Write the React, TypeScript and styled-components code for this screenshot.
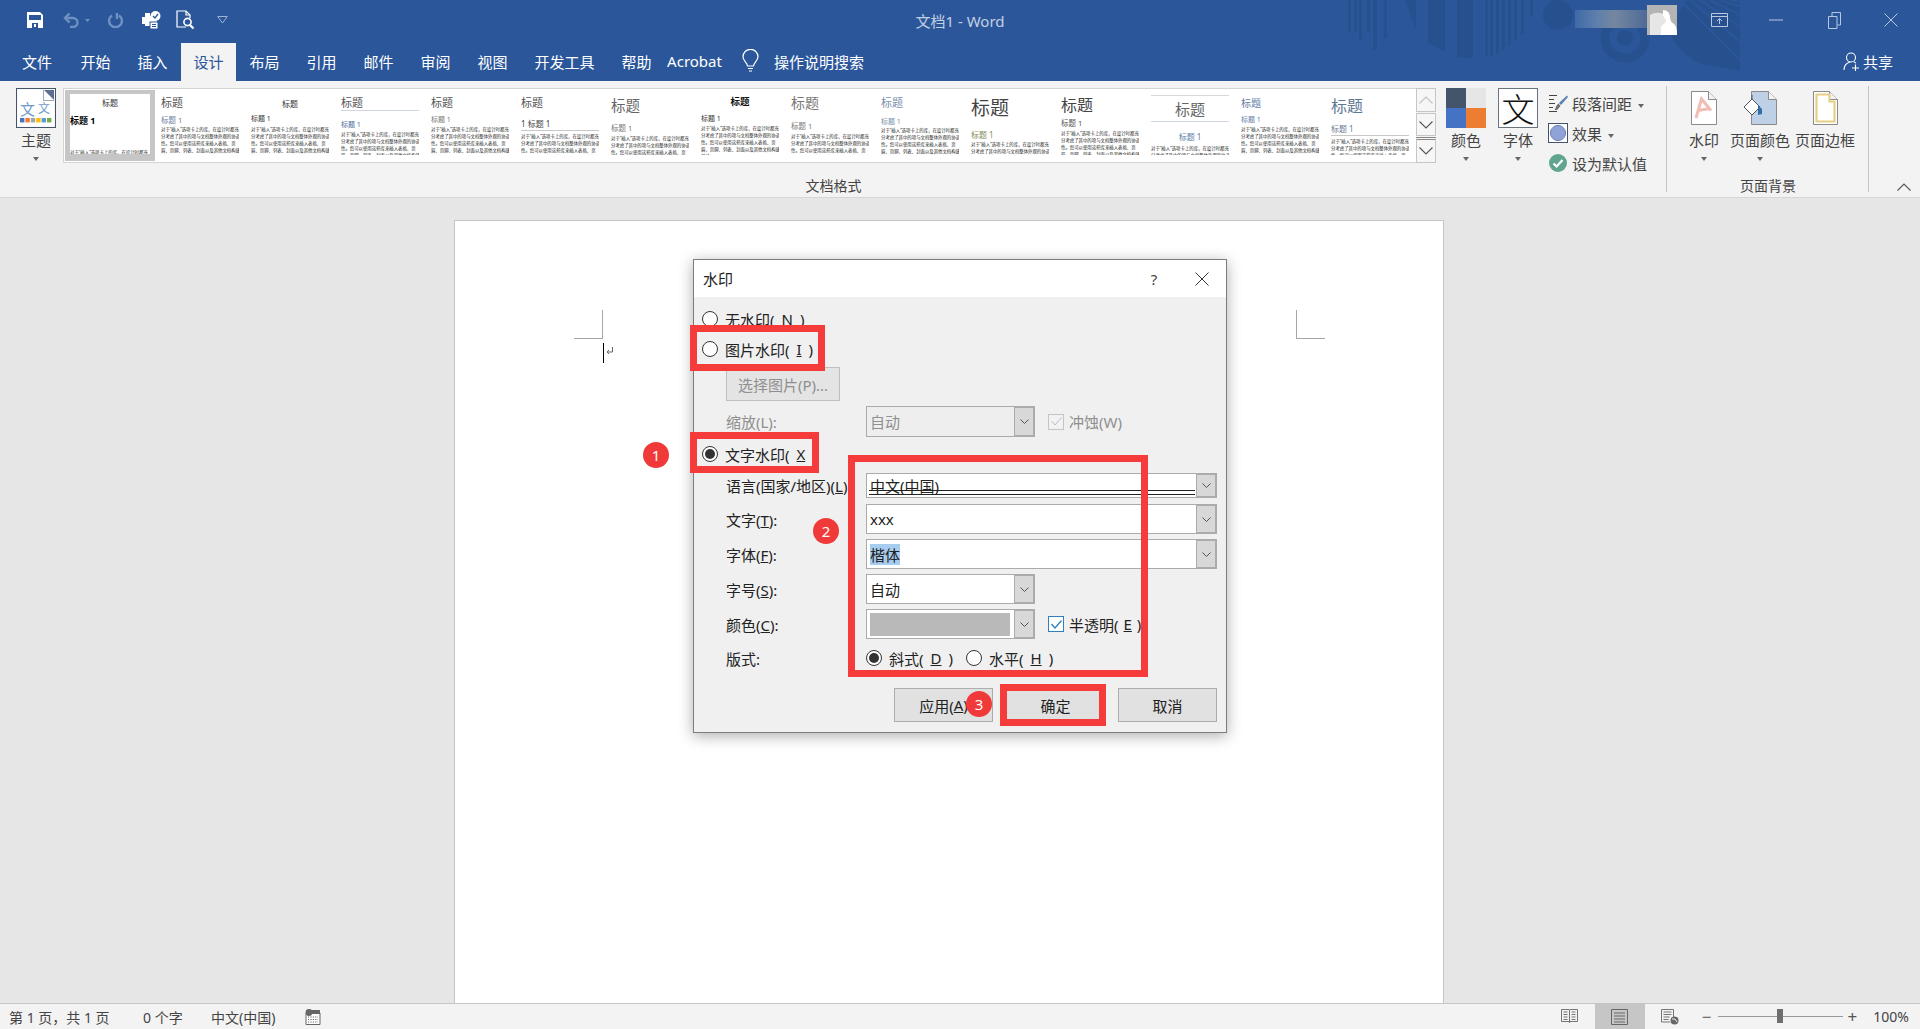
import React from "react";
import styled, { createGlobalStyle } from "styled-components";

const GlobalStyle = createGlobalStyle`
  html, body {
    margin: 0;
    padding: 0;
    background: #e6e6e6;
  }
  * {
    box-sizing: border-box;
  }
  body {
    font-family: "Noto Sans", "Noto Sans CJK SC", sans-serif;
  }
`;

const Screen = styled.div`
  position: relative;
  width: 1920px;
  height: 1029px;
  overflow: hidden;
  display: flex;
  flex-direction: column;
`;

/* ---------- title bar ---------- */

const TitleBar = styled.div`
  position: relative;
  height: 40px;
  flex: none;
  display: grid;
  grid-template-columns: 1fr auto 1fr;
  align-items: center;
  background: #2b579a;
`;

const TitleArt = styled.svg`
  position: absolute;
  left: 1340px;
  top: 0;
`;

const Qat = styled.div`
  position: relative;
  display: flex;
  align-items: center;
  padding-left: 27px;
`;

const QatSlot = styled.div<{ $w: number }>`
  width: ${(p) => p.$w}px;
  height: 20px;
  display: flex;
  align-items: center;
`;

const WindowTitle = styled.div`
  position: relative;
  font-size: 15px;
  color: #c3d0e4;
`;

const WindowControls = styled.div`
  position: relative;
  display: flex;
  justify-content: flex-end;
  align-items: center;
  height: 40px;
`;

const BlurredName = styled.div`
  width: 72px;
  height: 18px;
  margin-top: -2px;
  background: linear-gradient(90deg, #3f6aa7, #5f7fac 30%, #75879f 55%, #4e6a97);
`;

const Avatar = styled.div`
  width: 30px;
  height: 30px;
  background: #b4b4b4;
  overflow: hidden;
`;

const CtrlSlot = styled.div<{ $w: number }>`
  width: ${(p) => p.$w}px;
  display: flex;
  justify-content: center;
`;

/* ---------- tabs ---------- */

const TabBar = styled.div`
  height: 41px;
  flex: none;
  display: flex;
  align-items: flex-end;
  padding-left: 7px;
  background: #2b579a;
`;

const Tab = styled.div<{ $active?: boolean; $w: number }>`
  width: ${(p) => p.$w}px;
  height: 38px;
  display: flex;
  align-items: center;
  justify-content: center;
  padding-bottom: 2px;
  font-size: 15px;
  color: ${(p) => (p.$active ? "#2b579a" : "#fff")};
  background: ${(p) => (p.$active ? "#f3f3f3" : "transparent")};
`;

const SearchHint = styled.div`
  display: flex;
  align-items: center;
  gap: 15px;
  height: 38px;
  margin-left: 18px;
  padding-bottom: 2px;
  font-size: 15px;
  color: #fff;
`;

const Share = styled.div`
  display: flex;
  align-items: center;
  gap: 3px;
  height: 38px;
  margin-left: auto;
  padding: 0 27px 2px 0;
  font-size: 15px;
  color: #fff;
`;

/* ---------- ribbon ---------- */

const Ribbon = styled.div`
  height: 117px;
  flex: none;
  display: flex;
  background: #f3f3f3;
  border-bottom: 1px solid #d6d6d6;
  color: #444;
`;

const RibbonGroup = styled.div<{ $w: number; $sep?: boolean }>`
  width: ${(p) => p.$w}px;
  flex: none;
  display: flex;
  flex-direction: column;
  align-items: stretch;
  padding-top: 7px;
  position: relative;
  &::after {
    content: "";
    display: ${(p) => (p.$sep ? "block" : "none")};
    position: absolute;
    right: 0;
    top: 5px;
    bottom: 5px;
    width: 1px;
    background: #c6c6c6;
  }
`;

const GroupRow = styled.div<{ $pad: number; $gap?: number }>`
  height: 90px;
  display: flex;
  padding-left: ${(p) => p.$pad}px;
  gap: ${(p) => p.$gap || 0}px;
`;

const GroupLabel = styled.div`
  height: 16px;
  line-height: 16px;
  text-align: center;
  font-size: 14px;
  color: #444;
`;

const BigButton = styled.div<{ $w: number; $ml?: number }>`
  width: ${(p) => p.$w}px;
  margin-left: ${(p) => p.$ml || 0}px;
  flex: none;
  display: flex;
  flex-direction: column;
  align-items: center;
`;

const BigIcon = styled.div`
  width: 100%;
  height: 40px;
  display: flex;
  justify-content: center;
  align-items: center;
`;

const BigLabel = styled.div`
  height: 24px;
  line-height: 24px;
  font-size: 15px;
  white-space: nowrap;
  color: #444;
`;

const Caret = styled.span<{ $ml?: number }>`
  display: block;
  width: 0;
  height: 0;
  margin-top: 5px;
  margin-left: ${(p) => p.$ml || 0}px;
  border-left: 3px solid transparent;
  border-right: 3px solid transparent;
  border-top: 4px solid #666;
`;

const Gallery = styled.div`
  display: flex;
  width: 1373px;
  height: 75px;
  margin-left: 7px;
  flex: none;
`;

const GalleryList = styled.div`
  display: flex;
  flex: 1;
  padding: 1px;
  background: #fff;
  border: 1px solid #d4d4d4;
  border-right: 0;
  overflow: hidden;
`;

const Thumb = styled.div<{ $selected?: boolean }>`
  width: 90px;
  flex: none;
  padding: ${(p) => (p.$selected ? "4px 5px" : "5px 6px")};
  background: ${(p) => (p.$selected ? "#c6c6c6" : "#fff")};
`;

const ThumbInner = styled.div<{ $pad: number }>`
  height: 60px;
  overflow: hidden;
  padding-top: ${(p) => p.$pad}px;
  background: #fff;
`;

const ThumbTitle = styled.div<{
  $size: number;
  $color: string;
  $center?: boolean;
  $bold?: boolean;
  $h: number;
  $ruled?: boolean;
  $lined?: boolean;
}>`
  height: ${(p) => p.$h}px;
  line-height: ${(p) => p.$h}px;
  font-size: ${(p) => p.$size}px;
  color: ${(p) => p.$color};
  text-align: ${(p) => (p.$center ? "center" : "left")};
  font-weight: ${(p) => (p.$bold ? 700 : 400)};
  border-bottom: ${(p) => (p.$ruled ? "1px solid #cfd6e0" : "0")};
  border-top: ${(p) => (p.$lined ? "1px solid #d8d8d8" : "0")};
  white-space: nowrap;
`;

const ThumbHead = styled.div<{
  $size: number;
  $color: string;
  $gap: number;
  $center?: boolean;
  $bold?: boolean;
  $ruled?: boolean;
}>`
  height: ${(p) => (p.$ruled ? 11 : 8)}px;
  line-height: 8px;
  margin-top: ${(p) => p.$gap}px;
  font-size: ${(p) => p.$size}px;
  color: ${(p) => p.$color};
  text-align: ${(p) => (p.$center ? "center" : "left")};
  font-weight: ${(p) => (p.$bold ? 700 : 400)};
  border-bottom: ${(p) => (p.$ruled ? "1px solid #c8c8c8" : "0")};
  white-space: nowrap;
`;

const ThumbBody = styled.div<{ $gap: number }>`
  margin-top: ${(p) => p.$gap}px;
  font-size: 4.4px;
  line-height: 7px;
  color: #222;
  width: 80px;
`;

const Scroller = styled.div`
  width: 20px;
  flex: none;
  display: flex;
  flex-direction: column;
  gap: 1px;
`;

const ScrollBtn = styled.div<{ $h: number; $more?: boolean }>`
  height: ${(p) => p.$h}px;
  display: flex;
  justify-content: center;
  align-items: center;
  background: #f6f6f6;
  border: 1px solid #c6c6c6;
  border-top: ${(p) => (p.$more ? "3px double #888" : "1px solid #c6c6c6")};
`;

const ColorSwatch = styled.div`
  width: 40px;
  height: 40px;
  display: grid;
  grid-template-columns: 1fr 1fr;
  grid-template-rows: 1fr 1fr;
`;

const SwatchCell = styled.div<{ $c: string }>`
  background: ${(p) => p.$c};
`;

const FontSwatch = styled.div`
  width: 40px;
  height: 40px;
  display: flex;
  justify-content: center;
  align-items: center;
  background: #fff;
  border: 1px solid #6b7280;
  font-size: 33px;
  font-weight: 300;
  color: #111;
`;

const SmallCommands = styled.div`
  display: flex;
  flex-direction: column;
  margin-left: 10px;
  width: 115px;
`;

const SmallCommand = styled.div<{ $h: number }>`
  height: ${(p) => p.$h}px;
  display: flex;
  align-items: center;
  gap: 4px;
  font-size: 15px;
  white-space: nowrap;
  color: #444;
`;

const SmallIcon = styled.div`
  width: 20px;
  display: flex;
  justify-content: center;
`;

const Collapse = styled.div`
  flex: 1;
  display: flex;
  justify-content: flex-end;
  align-items: flex-end;
  padding: 0 9px 6px 0;
`;

/* ---------- page ---------- */

const Workspace = styled.div`
  flex: 1;
  min-height: 0;
  overflow: hidden;
  padding: 22px 22px 0 0;
  background: #e6e6e6;
  display: flex;
  justify-content: center;
`;

const Page = styled.div`
  width: 990px;
  height: 900px;
  flex: none;
  display: flex;
  justify-content: space-between;
  padding: 89px 118px 0 119px;
  background: #fff;
  border: 1px solid #c6c6c6;
`;

const MarginColumn = styled.div`
  display: flex;
  flex-direction: column;
`;

const CropMark = styled.div<{ $side: "left" | "right" }>`
  width: 29px;
  height: 29px;
  border-bottom: 1px solid #a6a6a6;
  border-${(p) => (p.$side === "left" ? "right" : "left")}: 1px solid #a6a6a6;
`;

const CaretLine = styled.div`
  display: flex;
  margin: 4px 0 0 29px;
`;

/* ---------- dialog ---------- */

const Dialog = styled.div`
  position: absolute;
  left: 693px;
  top: 259px;
  width: 534px;
  height: 474px;
  display: flex;
  flex-direction: column;
  background: #f0f0f0;
  border: 1px solid #7d7d7d;
  box-shadow: 0 3px 14px rgba(0, 0, 0, 0.32);
  font-size: 15px;
  color: #222;
`;

const DialogHead = styled.div`
  height: 37px;
  flex: none;
  display: flex;
  align-items: center;
  padding: 0 0 0 9px;
  background: #fff;
`;

const DialogTitle = styled.div`
  flex: 1;
`;

const HelpMark = styled.div`
  width: 16px;
  margin-right: 33px;
  text-align: center;
  color: #444;
`;

const CloseMark = styled.div`
  width: 14px;
  height: 14px;
  margin-right: 17px;
  display: flex;
`;

const DialogBody = styled.div`
  flex: 1;
  display: flex;
  flex-direction: column;
  padding: 12px 9px 0 8px;
`;

const RadioRow = styled.div<{ $mt?: number; $ml?: number }>`
  height: 20px;
  display: flex;
  align-items: center;
  margin-top: ${(p) => p.$mt || 0}px;
  margin-left: ${(p) => p.$ml || 0}px;
  gap: 7px;
  white-space: nowrap;
`;

const Radio = styled.span<{ $on?: boolean }>`
  width: 16px;
  height: 16px;
  flex: none;
  border-radius: 50%;
  border: 1px solid #333;
  background: #fff;
  display: flex;
  justify-content: center;
  align-items: center;
  &::after {
    content: "";
    display: ${(p) => (p.$on ? "block" : "none")};
    width: 10px;
    height: 10px;
    border-radius: 50%;
    background: #333;
  }
`;

const PushButton = styled.div<{ $w: number; $disabled?: boolean }>`
  width: ${(p) => p.$w}px;
  height: 34px;
  flex: none;
  display: flex;
  justify-content: center;
  align-items: center;
  background: #e1e1e1;
  border: 1px solid ${(p) => (p.$disabled ? "#bfbfbf" : "#adadad")};
  color: ${(p) => (p.$disabled ? "#8f8f8f" : "#222")};
  white-space: nowrap;
`;

const PictureButton = styled(PushButton)`
  margin: 8px 0 0 24px;
  background: #e4e4e4;
`;

const FieldRow = styled.div<{ $h: number; $mt: number }>`
  height: ${(p) => p.$h}px;
  margin-top: ${(p) => p.$mt}px;
  margin-left: 24px;
  display: flex;
  align-items: center;
`;

const FieldLabel = styled.div<{ $disabled?: boolean }>`
  width: 140px;
  flex: none;
  white-space: nowrap;
  color: ${(p) => (p.$disabled ? "#8f8f8f" : "#222")};
`;

const Combo = styled.div<{ $w: number; $disabled?: boolean }>`
  width: ${(p) => p.$w}px;
  height: 100%;
  flex: none;
  display: flex;
  align-items: stretch;
  background: ${(p) => (p.$disabled ? "#eeeeee" : "#fff")};
  border: 1px solid #ababab;
  color: ${(p) => (p.$disabled ? "#8f8f8f" : "#222")};
`;

const ComboValue = styled.div`
  flex: 1;
  min-width: 0;
  display: flex;
  align-items: center;
  padding-left: 3px;
`;

const LangValue = styled(ComboValue)`
  position: relative;
  &::after {
    content: "";
    position: absolute;
    left: 2px;
    right: 1px;
    bottom: 2px;
    height: 3px;
    border-top: 1px solid #222;
    border-bottom: 1px solid #222;
  }
`;

const Selected = styled.span`
  background: #a6cdf0;
`;

const ColorValue = styled.div`
  flex: 1;
  margin: 3px 4px 2px 3px;
  background: #b9b9b9;
`;

const ComboArrow = styled.div`
  width: 20px;
  flex: none;
  display: flex;
  justify-content: center;
  align-items: center;
  background: #d8d8d8;
  border: 1px solid #ababab;
`;

const CheckLabel = styled.div<{ $disabled?: boolean }>`
  display: flex;
  align-items: center;
  gap: 5px;
  margin-left: 13px;
  white-space: nowrap;
  color: ${(p) => (p.$disabled ? "#8f8f8f" : "#222")};
`;

const CheckBox = styled.span<{ $disabled?: boolean }>`
  width: 16px;
  height: 16px;
  flex: none;
  display: flex;
  justify-content: center;
  align-items: center;
  background: ${(p) => (p.$disabled ? "#f2f2f2" : "#fff")};
  border: 1px solid ${(p) => (p.$disabled ? "#c4c4c4" : "#2f7fc4")};
`;

const OrientationRow = styled.div`
  display: flex;
  align-items: center;
  gap: 13px;
`;

const DialogActions = styled.div`
  margin-top: 20px;
  display: flex;
  justify-content: flex-end;
  gap: 13px;
`;

/* ---------- annotations ---------- */

const RedBox = styled.div<{ $x: number; $y: number; $w: number; $h: number }>`
  position: absolute;
  left: ${(p) => p.$x}px;
  top: ${(p) => p.$y}px;
  width: ${(p) => p.$w}px;
  height: ${(p) => p.$h}px;
  border: 7px solid #f63b3b;
`;

const Badge = styled.div<{ $x: number; $y: number }>`
  position: absolute;
  left: ${(p) => p.$x - 13}px;
  top: ${(p) => p.$y - 13}px;
  width: 26px;
  height: 26px;
  border-radius: 50%;
  background: #f03a3a;
  color: #fff;
  font-size: 15px;
  display: flex;
  justify-content: center;
  align-items: center;
`;

/* ---------- status bar ---------- */

const StatusBar = styled.div`
  height: 26px;
  flex: none;
  display: flex;
  align-items: stretch;
  background: #f3f3f3;
  border-top: 1px solid #c6c6c6;
  font-size: 14px;
  color: #444;
`;

const StatusLeft = styled.div`
  display: flex;
  align-items: center;
  padding-left: 9px;
`;

const StatusText = styled.span<{ $w: number }>`
  width: ${(p) => p.$w}px;
  white-space: nowrap;
`;

const StatusRight = styled.div`
  margin-left: auto;
  display: flex;
  align-items: center;
  padding-right: 11px;
`;

const ViewBtn = styled.div<{ $active?: boolean; $w: number }>`
  width: ${(p) => p.$w}px;
  height: 25px;
  display: flex;
  justify-content: center;
  align-items: center;
  background: ${(p) => (p.$active ? "#c6c6c6" : "transparent")};
`;

const ZoomSign = styled.span<{ $ml: number }>`
  margin-left: ${(p) => p.$ml}px;
  font-size: 17px;
  line-height: 20px;
  color: #555;
`;

const ZoomTrack = styled.div`
  position: relative;
  width: 125px;
  height: 1px;
  margin-left: 6px;
  background: #9a9a9a;
`;

const ZoomThumb = styled.div`
  position: absolute;
  left: 59px;
  top: -7px;
  width: 6px;
  height: 14px;
  background: #6f6f6f;
`;

const ZoomValue = styled.span`
  margin-left: 16px;
  font-size: 14px;
`;

/* ---------- icons ---------- */

const SaveIcon = () => (
  <svg width="16" height="16" viewBox="0 0 16 16">
    <path fill="#fff" fillRule="evenodd" d="M0 0h13l3 3v13H0zM2 3v5h12V3zM5 11v5h6v-5zM7 12h2v3H7z" />
  </svg>
);

const UndoIcon = () => (
  <svg width="17" height="16" viewBox="0 0 17 16" fill="none" stroke="#6f90c0" strokeWidth="2.4">
    <path d="M2 6h8a4.4 4.4 0 0 1 0 9H7" />
    <path d="M6.5 1.5 2 6l4.5 4.5" />
  </svg>
);

const RedoIcon = () => (
  <svg width="16" height="17" viewBox="0 0 16 17" fill="none" stroke="#6f90c0" strokeWidth="2.4">
    <path d="M5 3.4a6.4 6.4 0 1 0 7 0" />
    <path d="M10 1v6" />
  </svg>
);

const TinyDown = ({ c = "#6f90c0" }: { c?: string }) => (
  <svg width="5" height="3" viewBox="0 0 5 3">
    <path fill={c} d="M0 0h5L2.5 3z" />
  </svg>
);

const PrintCheckIcon = () => (
  <svg width="19" height="18" viewBox="0 0 19 18">
    <path fill="#fff" d="M3 2h5v3h2l1 1h2v4h2v2h-3v-1H8v4H3v-2H0V6h3z" />
    <rect x="8" y="11" width="8" height="7" fill="#fff" stroke="#2b579a" />
    <path stroke="#2b579a" d="M10 13.5h4M10 15.5h4" />
    <circle cx="13.5" cy="5" r="5" fill="#fff" />
    <path d="M11 5l2 2 3-4" stroke="#2b579a" strokeWidth="1.3" fill="none" />
  </svg>
);

const PreviewIcon = () => (
  <svg width="19" height="20" viewBox="0 0 19 20" fill="none" stroke="#fff" strokeWidth="1.2">
    <path d="M10 17H1V1h9l4 4v3" />
    <path d="M10 1v4h4" />
    <circle cx="11.5" cy="12" r="3.6" strokeWidth="1.6" />
    <path d="M14 15l3.5 3.5" strokeWidth="2.2" />
  </svg>
);

const ChevronUpDown = ({ up, c = "#555", w = 14 }: { up?: boolean; c?: string; w?: number }) => (
  <svg width={w} height={w / 2 + 1} viewBox="0 0 14 8" fill="none" stroke={c} strokeWidth="1.1">
    <path d={up ? "M0.5 7.5 7 1l6.5 6.5" : "M0.5 0.5 7 7l6.5-6.5"} />
  </svg>
);

const ComboChevron = () => (
  <svg width="9" height="5" viewBox="0 0 9 5" fill="none" stroke="#444" strokeWidth="0.9">
    <path d="M0.5 0.5 4.5 4.5l4-4" />
  </svg>
);

const Bulb = () => (
  <svg width="17" height="24" viewBox="0 0 17 24" fill="none" stroke="#fff" strokeWidth="1.2">
    <path d="M5.5 17c0-3-4.5-5-4.5-9.2a7.5 7.5 0 0 1 15 0C16 12 11.5 14 11.5 17z" />
    <path d="M6 19.5h5M7 22h3" />
  </svg>
);

const ShareIcon = () => (
  <svg width="17" height="19" viewBox="0 0 17 19" fill="none" stroke="#fff" strokeWidth="1.1">
    <circle cx="8" cy="5.5" r="4.5" />
    <path d="M1 18c0-4 2.5-7 6-8M11 10c.8.3 1.4.7 2 1.2M9 16h7M12.5 12.5v7" />
  </svg>
);

const ThemeIcon = () => (
  <svg width="40" height="40" viewBox="0 0 40 40">
    <rect x="0.5" y="0.5" width="39" height="39" fill="#f8f8f8" stroke="#44546a" />
    <path fill="#fff" d="M2 2h26l10 10v26H2z" />
    <path fill="#5d6f8c" d="M28 2h10v10z" />
    <path fill="#44546a" d="M28 2v10h10v1H27V2z" opacity="0.5" />
    <text x="4" y="27" fontSize="15" fill="#6f9ac8" fontFamily="Noto Sans CJK SC">文</text>
    <text x="22" y="25" fontSize="12" fill="#6f9ac8" fontFamily="Noto Sans CJK SC">文</text>
    {["#4472c4", "#ed7d31", "#a5a5a5", "#ffc000", "#5b9bd5", "#70ad47"].map((c, i) => (
      <rect key={c} x={4 + i * 5.4} y="30" width="4.4" height="4.4" fill={c} />
    ))}
  </svg>
);

const SpacingIcon = () => (
  <svg width="19" height="19" viewBox="0 0 19 19" fill="none">
    <path stroke="#444" d="M0 1.5h8M0 5.5h5M0 9.5h6M0 13.5h4M0 17.5h8" />
    <path fill="#5a80b4" d="M18 1.5 19 3l-7 8-2-2z" />
    <path fill="#70706a" d="M9.5 9.5 11.5 12 8 16H5.5c1.5-1.5 1-4 4-6.5z" />
  </svg>
);

const EffectIcon = () => (
  <svg width="20" height="20" viewBox="0 0 20 20">
    <rect x="0.5" y="0.5" width="19" height="19" fill="#fff" stroke="#44546a" />
    <circle cx="10" cy="10" r="7.6" fill="#8fa3d8" stroke="#6f82b8" />
  </svg>
);

const DefaultIcon = () => (
  <svg width="18" height="18" viewBox="0 0 18 18">
    <circle cx="9" cy="9" r="9" fill="#5fa58f" />
    <path d="M4.5 9.5 7.6 12.5 13.5 6" fill="none" stroke="#fff" strokeWidth="2.2" />
  </svg>
);

const WatermarkIcon = () => (
  <svg width="26" height="34" viewBox="0 0 26 34" fill="none">
    <path d="M.5.5h17l8 8v25H.5z" fill="#fff" stroke="#8a8a8a" />
    <path d="M17.5.5v8h8" stroke="#8a8a8a" fill="#f3f3f3" />
    <path d="M5 27 10.5 8 20 19.5M7 19.5l12-2" stroke="#f0bcb4" strokeWidth="3" />
  </svg>
);

const PageColorIcon = () => (
  <svg width="34" height="34" viewBox="0 0 34 34" fill="none">
    <path d="M8.5.5h17l8 8v25h-25z" fill="#bdd0e6" stroke="#8a8a8a" />
    <path d="M25.5.5v8h8" stroke="#8a8a8a" fill="#f3f3f3" />
    <path d="M1 16 9 8l8 8-8 8z" fill="#fff" stroke="#555" />
    <path d="M9 8V4" stroke="#555" />
    <path d="M15 14l4 4v5l-4 1z" fill="#2f6fa8" />
  </svg>
);

const PageBorderIcon = () => (
  <svg width="25" height="34" viewBox="0 0 25 34" fill="none">
    <path d="M.5.5h16l8 8v25H.5z" fill="#fff" stroke="#8a8a8a" />
    <path d="M16.5.5v8h8" stroke="#8a8a8a" fill="#f3f3f3" />
    <path d="M3.5 3.5h13v7h5v20h-18z" stroke="#e6cf88" strokeWidth="2.2" />
  </svg>
);

const PaperIcon = ({ active }: { active?: boolean }) => (
  <svg width="17" height="16" viewBox="0 0 17 16" fill="none" stroke="#666">
    <path d="M.5.5h16v15H.5zM3 4h11M3 7h11M3 10h11M3 13h11" strokeWidth={active ? 1 : 0.9} />
  </svg>
);

const ReadIcon = () => (
  <svg width="17" height="16" viewBox="0 0 17 16" fill="none" stroke="#666" strokeWidth="0.9">
    <path d="M.5.5h7.5L8.5 1.5 9 .5h7.5v12H9L8.5 13.5 8 12.5H.5zM8.5 1.5v12M2.5 3h4M2.5 5.5h4M2.5 8h4M2.5 10.5h4M10.5 3h4M10.5 5.5h4M10.5 8h4M10.5 10.5h4" />
  </svg>
);

const WebIcon = () => (
  <svg width="18" height="16" viewBox="0 0 18 16" fill="none" stroke="#666" strokeWidth="0.9">
    <path d="M9 13H.5V.5H12.5V8M2.5 3h8M2.5 5.5h8M2.5 8h6M2.5 10.5h5" />
    <circle cx="13.5" cy="11.5" r="4" fill="#666" stroke="none" />
    <path d="M11 10h3l2 3" stroke="#fff" />
  </svg>
);

const MacroIcon = () => (
  <svg width="16" height="16" viewBox="0 0 16 16" fill="none">
    <path d="M1 4h14v11.5H1z" fill="#fff" stroke="#666" />
    <rect x="1" y="1" width="14" height="4" fill="#666" />
    <circle cx="4" cy="3.5" r="3.4" fill="#666" />
    <path stroke="#666" strokeDasharray="1.2 1.2" d="M3 8h10M3 10.5h10M3 13h10" />
  </svg>
);

const ArtStripes = () => (
  <TitleArt width="400" height="81" viewBox="0 0 400 81">
    <g fill="#27508f">
      {[
        [8, 3, 32],
        [14, 3, 32],
        [19, 3, 40],
        [27, 3, 32],
        [33, 4, 50],
        [44, 3, 38],
        [117, 16, 58],
        [145, 3, 56],
        [150, 3, 56],
        [156, 3, 54],
        [162, 3, 50],
        [168, 3, 46],
        [174, 3, 40],
        [181, 3, 34],
        [190, 3, 16],
      ].map(([x, w, h]) => (
        <rect key={x} x={x} y="0" width={w} height={h} />
      ))}
      <path d="M65 0h11v30zM88 0h17v52l-17-9z" />
      <circle cx="218" cy="15" r="15" />
      <circle cx="285" cy="38" r="8" />
      <circle cx="285" cy="38" r="20" fill="none" stroke="#27508f" strokeWidth="9" />
      <path d="M328 30c6 15 18 28 36 35l36 6V0h-53z" />
    </g>
    <g stroke="#2b579a" strokeWidth="2">
      {[0, 10, 20, 30, 40, 50].map((d) => (
        <path key={d} d={`M${340 + d} 0l60 ${60 - d}`} />
      ))}
    </g>
  </TitleArt>
);

/* ---------- data ---------- */

const SAMPLE =
  "对于“插入”选项卡上的库，在设计时都充分考虑了其中的项与文档整体外观的协调性。您可以使用这些库来插入表格、页眉、页脚、列表、封面以及其他文档构建基块。";

const TITLE_GRAY = "#555";
const BLUE = "#6c80a4";

interface ThumbData {
  pad: number;
  size: number;
  color: string;
  h?: number;
  center?: boolean;
  bold?: boolean;
  ruled?: boolean;
  lined?: boolean;
  head: string;
  headSize: number;
  headColor: string;
  headGap: number;
  headCenter?: boolean;
  headBold?: boolean;
  headRuled?: boolean;
  bodyGap: number;
}

const THUMBS: ThumbData[] = [
  { pad: 1, size: 8, color: "#333", h: 16, center: true, head: "标题 1", headSize: 9, headColor: "#000", headGap: 6, headBold: true, bodyGap: 24 },
  { pad: 0, size: 11, color: TITLE_GRAY, h: 16, head: "标题 1", headSize: 7.5, headColor: BLUE, headGap: 5, bodyGap: 2 },
  { pad: 1, size: 8, color: "#333", h: 16, center: true, head: "标题 1", headSize: 7, headColor: "#333", headGap: 3, bodyGap: 3 },
  { pad: 0, size: 11, color: TITLE_GRAY, h: 16, ruled: true, head: "标题 1", headSize: 7, headColor: "#4a6a9c", headGap: 10, bodyGap: 2 },
  { pad: 0, size: 11, color: TITLE_GRAY, h: 16, head: "标题 1", headSize: 7, headColor: "#777", headGap: 5, bodyGap: 2 },
  { pad: 0, size: 11, color: TITLE_GRAY, h: 16, head: "1 标题 1", headSize: 8, headColor: "#444", headGap: 9, headRuled: true, bodyGap: 2 },
  { pad: 2, size: 14.5, color: "#666", h: 16, head: "标题 1", headSize: 7.5, headColor: "#777", headGap: 11, bodyGap: 3 },
  { pad: 0, size: 9.5, color: "#111", h: 14, center: true, bold: true, head: "标题 1", headSize: 7, headColor: "#333", headGap: 6, bodyGap: 2 },
  { pad: 0, size: 14, color: "#777", h: 16, head: "标题 1", headSize: 7.5, headColor: "#777", headGap: 11, bodyGap: 3 },
  { pad: 0, size: 11, color: "#7b8fae", h: 16, head: "标题 1", headSize: 7, headColor: "#7b8fae", headGap: 7, bodyGap: 1 },
  { pad: 3, size: 19, color: "#444", h: 20, head: "标题 1", headSize: 8, headColor: "#7f8f56", headGap: 13, bodyGap: 2 },
  { pad: 2, size: 16, color: "#444", h: 16, head: "标题 1", headSize: 7.5, headColor: "#555", headGap: 6, bodyGap: 3 },
  { pad: 0, size: 15, color: "#666", h: 27, center: true, ruled: true, lined: true, head: "标题 1", headSize: 8, headColor: "#5b7da6", headGap: 11, headCenter: true, bodyGap: 4 },
  { pad: 0, size: 10, color: "#5f7ca8", h: 16, head: "标题 1", headSize: 7, headColor: "#5f7ca8", headGap: 5, bodyGap: 2 },
  { pad: 2, size: 16, color: "#5f7896", h: 18, head: "标题 1", headSize: 8, headColor: "#6c7d96", headGap: 10, headRuled: true, bodyGap: 2 },
];

const TABS: [string, number, boolean?][] = [
  ["文件", 60],
  ["开始", 57],
  ["插入", 57],
  ["设计", 55, true],
  ["布局", 57],
  ["引用", 57],
  ["邮件", 57],
  ["审阅", 57],
  ["视图", 57],
  ["开发工具", 87],
  ["帮助", 57],
  ["Acrobat", 59],
];

const App = () => (
  <>
    <GlobalStyle />
    <Screen>
      <TitleBar>
        <ArtStripes />
        <Qat>
          <QatSlot $w={36}><SaveIcon /></QatSlot>
          <QatSlot $w={22}><UndoIcon /></QatSlot>
          <QatSlot $w={22}><TinyDown /></QatSlot>
          <QatSlot $w={35}><RedoIcon /></QatSlot>
          <QatSlot $w={34}><PrintCheckIcon /></QatSlot>
          <QatSlot $w={41}><PreviewIcon /></QatSlot>
          <QatSlot $w={12}>
            <svg width="11" height="8" viewBox="0 0 11 8" fill="none" stroke="#9fb4d6">
              <path d="M.5 .5h10M1 1l4.500 6 4.500-6" />
            </svg>
          </QatSlot>
        </Qat>
        <WindowTitle>文档1 - Word</WindowTitle>
        <WindowControls>
          <BlurredName />
          <Avatar>
            <svg width="30" height="30" viewBox="0 0 30 30">
              <path fill="#e6e6e6" d="M3 10c5-3 11-3 15 0v20H3z" />
              <path fill="#fff" d="M16 5c4 0 7 3 7 7 0 3 1 5 4 7 2 2 3 5 3 11H14c0-6-1-9 3-11 2-2 2-5-1-8z" />
            </svg>
          </Avatar>
          <CtrlSlot $w={84}>
            <svg width="17" height="14" viewBox="0 0 17 14" fill="none" stroke="#b9c8e0">
              <path d="M.5.5h16v13H.5zM.5 3.500h16M8.500 11V6M6 8l2.500-2.500L11 8" />
            </svg>
          </CtrlSlot>
          <CtrlSlot $w={30}>
            <svg width="14" height="2" viewBox="0 0 14 2"><path stroke="#b9c8e0" d="M0 1h14" /></svg>
          </CtrlSlot>
          <CtrlSlot $w={86}>
            <svg width="13" height="17" viewBox="0 0 13 17" fill="none" stroke="#b9c8e0">
              <path d="M.5 4.500h8.500v12H.5zM4 4V.5h8.500V13H9.500" />
            </svg>
          </CtrlSlot>
          <CtrlSlot $w={28}>
            <svg width="14" height="14" viewBox="0 0 14 14" stroke="#b9c8e0"><path d="M.5.5l13 13M13.500.5l-13 13" /></svg>
          </CtrlSlot>
          <CtrlSlot $w={15} />
        </WindowControls>
      </TitleBar>

      <TabBar>
        {TABS.map(([label, w, active]) => (
          <Tab key={label} $w={w} $active={active}>{label}</Tab>
        ))}
        <SearchHint>
          <Bulb />
          操作说明搜索
        </SearchHint>
        <Share>
          <ShareIcon />
          共享
        </Share>
      </TabBar>

      <Ribbon>
        <RibbonGroup $w={1667} $sep>
          <GroupRow $pad={16}>
            <BigButton $w={40}>
              <BigIcon><ThemeIcon /></BigIcon>
              <BigLabel>主题</BigLabel>
              <Caret />
            </BigButton>
            <Gallery>
              <GalleryList>
                {THUMBS.map((t, i) => (
                  <Thumb key={i} $selected={i === 0}>
                    <ThumbInner $pad={t.pad}>
                      <ThumbTitle
                        $size={t.size}
                        $color={t.color}
                        $h={t.h || 16}
                        $center={t.center}
                        $bold={t.bold}
                        $ruled={t.ruled}
                        $lined={t.lined}
                      >
                        标题
                      </ThumbTitle>
                      <ThumbHead
                        $size={t.headSize}
                        $color={t.headColor}
                        $gap={t.headGap}
                        $center={t.headCenter}
                        $bold={t.headBold}
                        $ruled={t.headRuled}
                      >
                        {t.head}
                      </ThumbHead>
                      <ThumbBody $gap={t.bodyGap}>{SAMPLE}</ThumbBody>
                    </ThumbInner>
                  </Thumb>
                ))}
              </GalleryList>
              <Scroller>
                <ScrollBtn $h={24}><ChevronUpDown up c="#c4c4c4" /></ScrollBtn>
                <ScrollBtn $h={23}><ChevronUpDown /></ScrollBtn>
                <ScrollBtn $h={26} $more><ChevronUpDown /></ScrollBtn>
              </Scroller>
            </Gallery>
            <BigButton $w={40} $ml={10}>
              <ColorSwatch>
                <SwatchCell $c="#44546a" />
                <SwatchCell $c="#e7e6e6" />
                <SwatchCell $c="#4472c4" />
                <SwatchCell $c="#ed7d31" />
              </ColorSwatch>
              <BigLabel>颜色</BigLabel>
              <Caret />
            </BigButton>
            <BigButton $w={40} $ml={12}>
              <FontSwatch>文</FontSwatch>
              <BigLabel>字体</BigLabel>
              <Caret />
            </BigButton>
            <SmallCommands>
              <SmallCommand $h={30}>
                <SmallIcon><SpacingIcon /></SmallIcon>
                段落间距
                <Caret $ml={2} />
              </SmallCommand>
              <SmallCommand $h={30}>
                <SmallIcon><EffectIcon /></SmallIcon>
                效果
                <Caret $ml={2} />
              </SmallCommand>
              <SmallCommand $h={30}>
                <SmallIcon><DefaultIcon /></SmallIcon>
                设为默认值
              </SmallCommand>
            </SmallCommands>
          </GroupRow>
          <GroupLabel>文档格式</GroupLabel>
        </RibbonGroup>

        <RibbonGroup $w={202} $sep>
          <GroupRow $pad={22}>
            <BigButton $w={30}>
              <BigIcon><WatermarkIcon /></BigIcon>
              <BigLabel>水印</BigLabel>
              <Caret />
            </BigButton>
            <BigButton $w={60} $ml={11}>
              <BigIcon><PageColorIcon /></BigIcon>
              <BigLabel>页面颜色</BigLabel>
              <Caret />
            </BigButton>
            <BigButton $w={60} $ml={5}>
              <BigIcon><PageBorderIcon /></BigIcon>
              <BigLabel>页面边框</BigLabel>
            </BigButton>
          </GroupRow>
          <GroupLabel>页面背景</GroupLabel>
        </RibbonGroup>

        <Collapse><ChevronUpDown up c="#555" /></Collapse>
      </Ribbon>

      <Workspace>
        <Page>
          <MarginColumn>
            <CropMark $side="left" />
            <CaretLine>
              <svg width="12" height="20" viewBox="0 0 12 20" fill="none" stroke="#666">
                <path stroke="#000" d="M.5 0v20" />
                <path d="M9.500 4v5H4M6 7 4 9l2 2" />
              </svg>
            </CaretLine>
          </MarginColumn>
          <CropMark $side="right" />
        </Page>
      </Workspace>

      <StatusBar>
        <StatusLeft>
          <StatusText $w={134}>第 1 页，共 1 页</StatusText>
          <StatusText $w={68}>0 个字</StatusText>
          <StatusText $w={94}>中文(中国)</StatusText>
          <MacroIcon />
        </StatusLeft>
        <StatusRight>
          <ViewBtn $w={50}><ReadIcon /></ViewBtn>
          <ViewBtn $w={50} $active><PaperIcon active /></ViewBtn>
          <ViewBtn $w={50}><WebIcon /></ViewBtn>
          <ZoomSign $ml={7}>−</ZoomSign>
          <ZoomTrack><ZoomThumb /></ZoomTrack>
          <ZoomSign $ml={5}>+</ZoomSign>
          <ZoomValue>100%</ZoomValue>
        </StatusRight>
      </StatusBar>

      <Dialog>
        <DialogHead>
          <DialogTitle>水印</DialogTitle>
          <HelpMark>?</HelpMark>
          <CloseMark>
            <svg width="14" height="14" viewBox="0 0 14 14" stroke="#333"><path d="M.5.5l13 13M13.500.5l-13 13" /></svg>
          </CloseMark>
        </DialogHead>
        <DialogBody>
          <RadioRow><Radio />无水印(<u>N</u>)</RadioRow>
          <RadioRow $mt={10}><Radio />图片水印(<u>I</u>)</RadioRow>
          <PictureButton $w={114} $disabled>选择图片(P)...</PictureButton>
          <FieldRow $h={31} $mt={5}>
            <FieldLabel $disabled>缩放(L):</FieldLabel>
            <Combo $w={169} $disabled>
              <ComboValue>自动</ComboValue>
              <ComboArrow><ComboChevron /></ComboArrow>
            </Combo>
            <CheckLabel $disabled>
              <CheckBox $disabled>
                <svg width="11" height="9" viewBox="0 0 11 9" fill="none" stroke="#bdbdbd"><path d="M.5 4 4 8l6.500-7.500" /></svg>
              </CheckBox>
              冲蚀(W)
            </CheckLabel>
          </FieldRow>
          <RadioRow $mt={7}><Radio $on />文字水印(<u>X</u>)</RadioRow>
          <FieldRow $h={25} $mt={9}>
            <FieldLabel>语言(国家/地区)(<u>L</u>):</FieldLabel>
            <Combo $w={351}>
              <LangValue>中文(中国)</LangValue>
              <ComboArrow><ComboChevron /></ComboArrow>
            </Combo>
          </FieldRow>
          <FieldRow $h={30} $mt={6}>
            <FieldLabel>文字(<u>T</u>):</FieldLabel>
            <Combo $w={351}>
              <ComboValue>xxx</ComboValue>
              <ComboArrow><ComboChevron /></ComboArrow>
            </Combo>
          </FieldRow>
          <FieldRow $h={30} $mt={5}>
            <FieldLabel>字体(<u>F</u>):</FieldLabel>
            <Combo $w={351}>
              <ComboValue><Selected>楷体</Selected></ComboValue>
              <ComboArrow><ComboChevron /></ComboArrow>
            </Combo>
          </FieldRow>
          <FieldRow $h={30} $mt={5}>
            <FieldLabel>字号(<u>S</u>):</FieldLabel>
            <Combo $w={169}>
              <ComboValue>自动</ComboValue>
              <ComboArrow><ComboChevron /></ComboArrow>
            </Combo>
          </FieldRow>
          <FieldRow $h={30} $mt={5}>
            <FieldLabel>颜色(<u>C</u>):</FieldLabel>
            <Combo $w={169}>
              <ColorValue />
              <ComboArrow><ComboChevron /></ComboArrow>
            </Combo>
            <CheckLabel>
              <CheckBox>
                <svg width="11" height="9" viewBox="0 0 11 9" fill="none" stroke="#2f7fc4" strokeWidth="1.3"><path d="M.5 4 4 8l6.500-7.500" /></svg>
              </CheckBox>
              半透明(<u>E</u>)
            </CheckLabel>
          </FieldRow>
          <FieldRow $h={20} $mt={9}>
            <FieldLabel>版式:</FieldLabel>
            <OrientationRow>
              <RadioRow><Radio $on />斜式(<u>D</u>)</RadioRow>
              <RadioRow><Radio />水平(<u>H</u>)</RadioRow>
            </OrientationRow>
          </FieldRow>
          <DialogActions>
            <PushButton $w={99}>应用(<u>A</u>)</PushButton>
            <PushButton $w={99}>确定</PushButton>
            <PushButton $w={99}>取消</PushButton>
          </DialogActions>
        </DialogBody>
      </Dialog>

      <RedBox $x={690} $y={325} $w={135} $h={46} />
      <RedBox $x={690} $y={432} $w={129} $h={41} />
      <RedBox $x={848} $y={455} $w={300} $h={222} />
      <RedBox $x={1000} $y={684} $w={106} $h={42} />
      <Badge $x={656} $y={455}>1</Badge>
      <Badge $x={826} $y={531}>2</Badge>
      <Badge $x={979} $y={704}>3</Badge>
    </Screen>
  </>
);

export default App;
